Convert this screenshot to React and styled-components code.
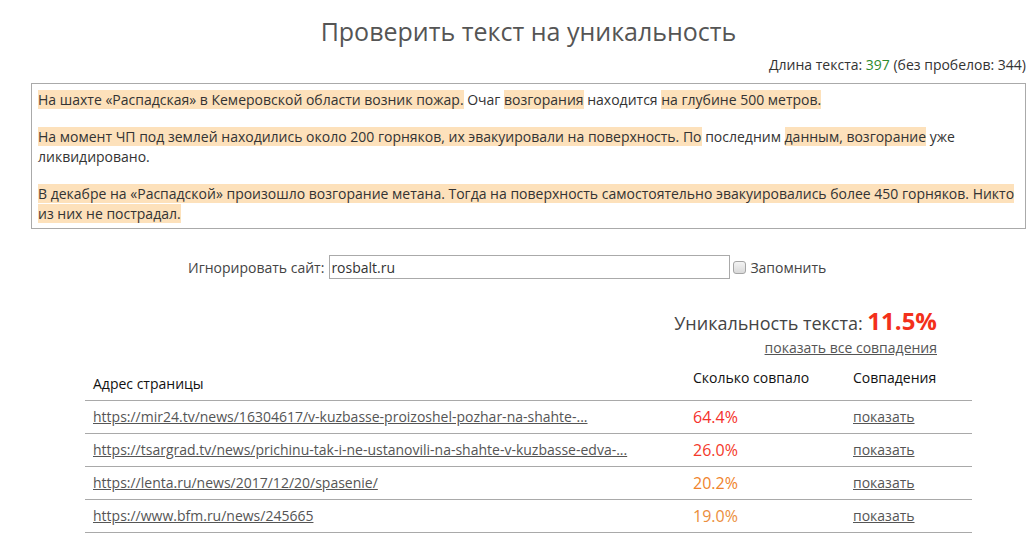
import React from 'react';
import styled, { createGlobalStyle } from 'styled-components';

const Global = createGlobalStyle`
    body {
        margin: 0;
        background: #fff;
        font-family: "Open Sans", "Liberation Sans", sans-serif;
        font-size: 14px;
        color: #333;
    }
`;

const matches = [
    { url: 'https://mir24.tv/news/16304617/v-kuzbasse-proizoshel-pozhar-na-shahte-...', pct: '64.4%', color: '#f5312c' },
    { url: 'https://tsargrad.tv/news/prichinu-tak-i-ne-ustanovili-na-shahte-v-kuzbasse-edva-...', pct: '26.0%', color: '#f4392a' },
    { url: 'https://lenta.ru/news/2017/12/20/spasenie/', pct: '20.2%', color: '#f0832c' },
    { url: 'https://www.bfm.ru/news/245665', pct: '19.0%', color: '#eb8e3c' },
];

function App() {
    return (
        <Page>
            <Global />
            <Title>Проверить текст на уникальность</Title>
            <Length>
                Длина текста: <Count>397</Count> (без пробелов: 344)
            </Length>
            <TextBox>
                <p>
                    <Mark>На шахте «Распадская» в Кемеровской области возник пожар.</Mark> Очаг <Mark>возгорания</Mark> находится <Mark>на глубине 500 метров. </Mark>
                </p>
                <p>
                    <Mark>На момент ЧП под землей находились около 200 горняков, их эвакуировали на поверхность. По</Mark> последним <Mark>данным, возгорание</Mark> уже ликвидировано.
                </p>
                <p>
                    <Mark>В декабре на «Распадской» произошло возгорание метана. Тогда на поверхность самостоятельно эвакуировались более 450 горняков. Никто из них не пострадал.</Mark>
                </p>
            </TextBox>
            <IgnoreRow>
                <span>Игнорировать сайт:</span>
                <SiteInput defaultValue="rosbalt.ru" />
                <Remember>
                    <Check type="checkbox" />
                    Запомнить
                </Remember>
            </IgnoreRow>
            <Results>
                <Score>
                    Уникальность текста: <Percent>11.5%</Percent>
                </Score>
                <ShowAll href="#">показать все совпадения</ShowAll>
                <Table>
                    <colgroup>
                        <col style={{ width: 600 }} />
                        <col style={{ width: 160 }} />
                        <col />
                    </colgroup>
                    <thead>
                        <tr>
                            <Th $bottom>Адрес страницы</Th>
                            <Th>Сколько совпало</Th>
                            <Th>Совпадения</Th>
                        </tr>
                    </thead>
                    <tbody>
                        {matches.map((m) => (
                            <tr key={m.url}>
                                <Td><Link href="#">{m.url}</Link></Td>
                                <Td $pct style={{ color: m.color }}>{m.pct}</Td>
                                <Td><Link href="#">показать</Link></Td>
                            </tr>
                        ))}
                    </tbody>
                </Table>
            </Results>
        </Page>
    );
}

export default App;

const Page = styled.div`
    width: 995px;
    margin-left: 31px;
`;

const Title = styled.h1`
    margin: 0;
    padding-top: 14px;
    font-size: 25px;
    line-height: 34px;
    font-weight: 400;
    color: #555;
    text-align: center;
`;

const Length = styled.div`
    margin-top: 7px;
    line-height: 20px;
    text-align: right;
    color: #333;
`;

const Count = styled.span`
    color: #2e8b2e;
`;

const TextBox = styled.div`
    box-sizing: border-box;
    margin-top: 8px;
    border: 1px solid #aaa;
    padding: 6px 6px 4px 6px;
    line-height: 20px;
    color: #333;

    p {
        margin: 0 0 17px;
    }
    p:last-child {
        margin-bottom: 0;
    }
`;

const Mark = styled.span`
    background: #fde1bb;
`;

const IgnoreRow = styled.div`
    display: flex;
    align-items: center;
    margin-top: 26px;
    padding-left: 157px;
    height: 24px;
    color: #444;

    span {
        margin-right: 5px;
    }
`;

const SiteInput = styled.input`
    box-sizing: border-box;
    width: 401px;
    height: 24px;
    border: 1px solid #aaa;
    padding: 0 1px;
    font-family: inherit;
    font-size: 14px;
    color: #333;
    outline: none;
`;

const Remember = styled.label`
    display: flex;
    align-items: center;
    margin-left: 3px;
    color: #444;
`;

const Check = styled.input`
    appearance: none;
    box-sizing: border-box;
    width: 13px;
    height: 13px;
    margin: 0 4px 0 0;
    border: 1px solid #a5a5a5;
    border-radius: 3px;
    background: linear-gradient(#f4f4f4, #d9d9d9);
`;

const Results = styled.div`
    width: 887px;
    margin: 0 auto;
    display: flex;
    flex-direction: column;
`;

const Score = styled.div`
    margin-top: 27px;
    align-self: flex-end;
    margin-right: 35px;
    font-size: 18px;
    line-height: 29px;
    color: #444;
`;

const Percent = styled.span`
    font-size: 24px;
    font-weight: 700;
    color: #f3301b;
`;

const ShowAll = styled.a`
    align-self: flex-end;
    margin-right: 35px;
    line-height: 20px;
    color: #555;
    text-decoration: underline;
`;

const Table = styled.table`
    margin-top: 10px;
    width: 887px;
    table-layout: fixed;
    border-collapse: collapse;
`;

const Th = styled.th`
    box-sizing: border-box;
    height: 32px;
    padding: ${(p) => (p.$bottom ? '0 8px 6px' : '0 8px')};
    vertical-align: ${(p) => (p.$bottom ? 'bottom' : 'top')};
    text-align: left;
    font-weight: 400;
    line-height: 20px;
    color: #111;
    white-space: nowrap;
    border-bottom: 1px solid #a9a9a9;
`;

const Td = styled.td`
    box-sizing: border-box;
    height: 33px;
    padding: 0 8px;
    font-size: ${(p) => (p.$pct ? '16px' : '14px')};
    line-height: 20px;
    white-space: nowrap;
    border-bottom: 1px solid #a9a9a9;
    vertical-align: middle;
`;

const Link = styled.a`
    color: #555;
    text-decoration: underline;
`;
